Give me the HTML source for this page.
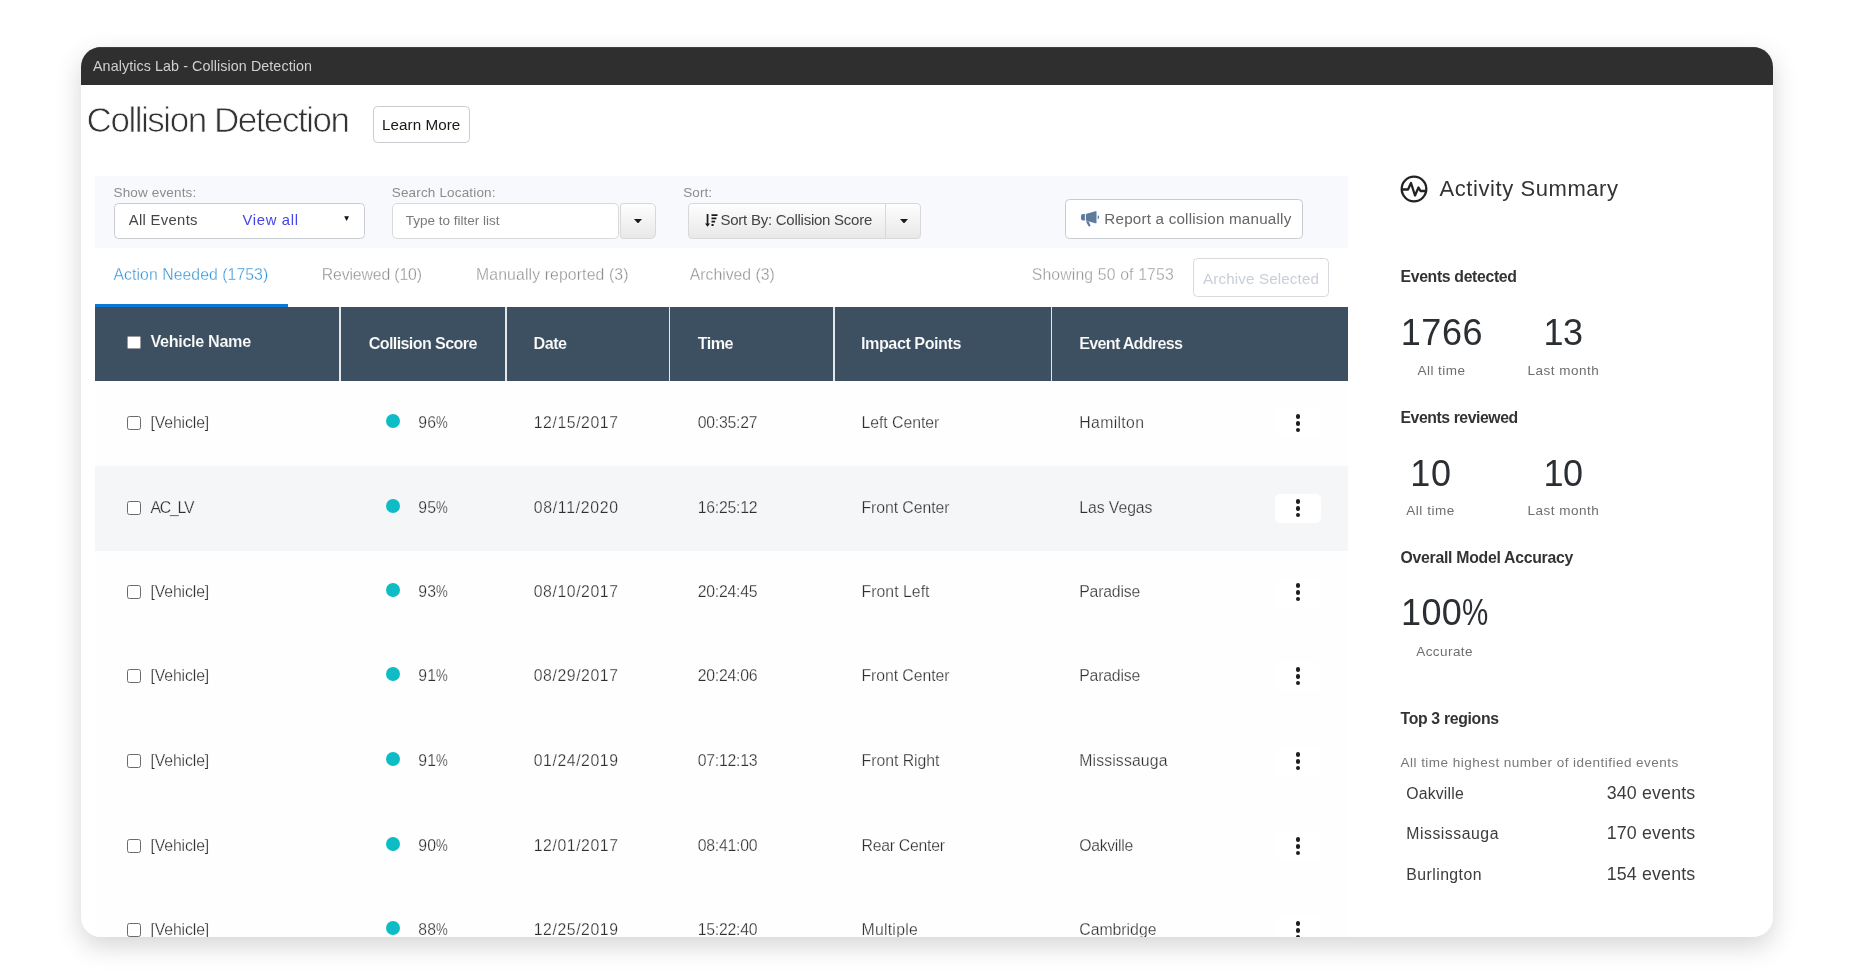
<!DOCTYPE html>
<html lang="en">
<head>
<meta charset="utf-8">
<title>Analytics Lab - Collision Detection</title>
<style>
*{box-sizing:border-box;margin:0;padding:0}
html,body{width:1854px;height:980px;overflow:hidden;background:#fff}
body{font-family:"Liberation Sans",sans-serif;position:relative}
.card{position:absolute;left:81px;top:47px;width:1692px;height:890px;border-radius:20px;background:#fff;
 box-shadow:0 9px 26px rgba(0,0,0,.17);overflow:hidden;will-change:transform}
.card *{position:absolute;white-space:nowrap}
.card .g{display:contents}
.card svg *{position:static}
.card .pc{position:static;display:inline-block;font-weight:inherit;transform-origin:0 50%}
.titlebar{left:0;top:0;width:1692px;height:37.5px;background:#2f2f2f;border-top:1px solid #0b4f74}
.main{left:14px;top:333.5px;width:1253px;height:557px;background:#fefefe}
.btn{border:1px solid #c8ccd1;border-radius:4.5px;background:#fff}
.grad{background:linear-gradient(#fefefe,#e8e8e8);border:1px solid #d8d8d8}
.th{background:#3c5061}
.sep{background:#e4e7ea}
.cb{border:1.3px solid #6b6b6b;border-radius:2.5px;background:#fff}
.dot{border-radius:50%;background:#0ebcc6}
.kebab{border-radius:5px;background:#fff}
.kebab i{left:20.5px;width:4.3px;height:4.3px;border-radius:50%;background:#1e1e1e}
</style>
</head>
<body>
<div class="card">
<header class="g">
<div class="titlebar"></div>
<span style="left:12.00px;top:9.55px;font-size:14.3px;line-height:18px;letter-spacing:0.082px;color:#d0d0d0;">Analytics Lab - Collision Detection</span>
</header>
<main class="g">
<div class="main"></div>
<h1 style="left:5.60px;top:51.27px;font-size:35px;line-height:44px;letter-spacing:-1.469px;color:#333;-webkit-text-stroke:0.75px #fff;font-weight:400;">Collision Detection</h1>
<div class="g" role="button">
<div class="btn" style="left:291.50px;top:59.30px;width:97.00px;height:36.40px;"></div>
<span style="left:301.00px;top:67.83px;font-size:15.2px;line-height:19px;letter-spacing:0.061px;color:#181818;">Learn More</span>
</div>
<section class="g" aria-label="Filters">
<div style="left:14.00px;top:128.75px;width:1253.00px;height:71.75px;background:#f8f9fd;"></div>
<label style="left:32.50px;top:136.82px;font-size:13.5px;line-height:17px;letter-spacing:0.155px;color:#8c8c8c;">Show events:</label>
<div class="btn" style="left:33.00px;top:156.00px;width:250.50px;height:35.50px;"></div>
<span style="left:47.75px;top:164.07px;font-size:14.8px;line-height:18px;letter-spacing:0.328px;color:#454545;">All Events</span>
<span style="left:161.50px;top:164.07px;font-size:14.8px;line-height:18px;letter-spacing:0.679px;color:#4545e8;">View all</span>
<svg style="left:262.9px;top:169.1px" width="5.2" height="5.2" viewBox="0 0 6 6"><path d="M0.2 0.4h5.6L3 5.8z" fill="#111"/></svg>
<label style="left:310.75px;top:136.82px;font-size:13.5px;line-height:17px;letter-spacing:0.163px;color:#8c8c8c;">Search Location:</label>
<div class="btn" style="left:310.75px;top:156.00px;width:227.25px;height:35.50px;border-radius:5px;border-color:#d9d9d9;"></div>
<span style="left:324.75px;top:164.82px;font-size:13.5px;line-height:17px;letter-spacing:-0.003px;color:#7a7a7a;">Type to filter list</span>
<div class="grad" style="left:538.50px;top:156.00px;width:36.00px;height:35.50px;border-radius:3px 5px 5px 3px;"></div>
<svg style="left:553px;top:171.6px" width="8" height="4.5" viewBox="0 0 9 5"><path d="M0 0h9L4.5 5z" fill="#1a1a1a"/></svg>
<label style="left:602.25px;top:136.82px;font-size:13.5px;line-height:17px;letter-spacing:0.062px;color:#8c8c8c;">Sort:</label>
<div class="grad" style="left:607.00px;top:156.00px;width:197.50px;height:35.50px;border-radius:4px 0 0 4px;"></div>
<div class="grad" style="left:804.00px;top:156.00px;width:36.00px;height:35.50px;border-radius:0 4px 4px 0;"></div>
<svg style="left:624.4px;top:167px" width="13" height="13" viewBox="0 0 13 13"><path d="M1.7 0h1.7v9.6h1.6L2.55 12.8 0 9.6h1.7z M6.5 0.2h6v1.8h-6z M6.5 3.5h4.9v1.8H6.5z M6.5 6.8h3.6v1.8H6.5z M6.5 10.1h2.1v1.9H6.5z" fill="#1a1a1a"/></svg>
<span style="left:639.50px;top:163.30px;font-size:15px;line-height:19px;letter-spacing:-0.252px;color:#444;">Sort By: Collision Score</span>
<svg style="left:819.2px;top:171.6px" width="8" height="4.5" viewBox="0 0 9 5"><path d="M0 0h9L4.5 5z" fill="#1a1a1a"/></svg>
<div class="g" role="button">
<div class="btn" style="left:984.00px;top:152.00px;width:237.50px;height:39.50px;"></div>
<svg style="left:1000px;top:164.1px" width="19" height="16" viewBox="0 0 19 16"><path d="M2 2.9h1.9v6.5H2a2 2 0 0 1-2-2V4.9a2 2 0 0 1 2-2z M4.9 2.9 14.2 0.2h1.3v12.1h-1.3L4.9 9.4z M16.7 4.6h.5a.8.8 0 0 1 .8.8v1.7a.8.8 0 0 1-.8.8h-.5z M5.4 9.9l2.3.6 1.9 4.3-1.6.9-2.6-4.2z" fill="#5d7c9c"/></svg>
<span style="left:1023.30px;top:161.83px;font-size:15.2px;line-height:19px;letter-spacing:0.210px;color:#666;">Report a collision manually</span>
</div>
</section>
<nav class="g" aria-label="Event tabs">
<span style="left:32.50px;top:217.73px;font-size:15.8px;line-height:20px;letter-spacing:0.055px;color:#3493d6;-webkit-text-stroke:0.3px #fff;">Action Needed (1753)</span>
<span style="left:240.75px;top:217.73px;font-size:15.8px;line-height:20px;letter-spacing:-0.133px;color:#8f8f8f;-webkit-text-stroke:0.3px #fff;">Reviewed (10)</span>
<span style="left:395.00px;top:217.73px;font-size:15.8px;line-height:20px;letter-spacing:0.117px;color:#8f8f8f;-webkit-text-stroke:0.3px #fff;">Manually reported (3)</span>
<span style="left:608.75px;top:217.73px;font-size:15.8px;line-height:20px;letter-spacing:-0.014px;color:#8f8f8f;-webkit-text-stroke:0.3px #fff;">Archived (3)</span>
<div style="left:14.00px;top:256.75px;width:192.50px;height:3.75px;background:#0b7ad4;"></div>
</nav>
<span style="left:950.75px;top:217.73px;font-size:15.8px;line-height:20px;letter-spacing:0.135px;color:#999;-webkit-text-stroke:0.3px #fff;">Showing 50 of 1753</span>
<div class="g" role="button" aria-disabled="true">
<div class="btn" style="left:1112.00px;top:211.00px;width:136.00px;height:39.00px;border-color:#d6dade;"></div>
<span style="left:1122.00px;top:222.48px;font-size:15.2px;line-height:19px;letter-spacing:0.130px;color:#c9cfd6;">Archive Selected</span>
</div>
<div class="g" role="table" aria-label="Collision events">
<div class="g" role="row">
<div class="th" style="left:14.40px;top:260.00px;width:1252.60px;height:73.50px;"></div>
<div class="sep" style="left:258.20px;top:260.00px;width:1.80px;height:73.50px;"></div>
<div class="sep" style="left:424.10px;top:260.00px;width:1.80px;height:73.50px;"></div>
<div class="sep" style="left:587.50px;top:260.00px;width:1.80px;height:73.50px;"></div>
<div class="sep" style="left:751.85px;top:260.00px;width:1.80px;height:73.50px;"></div>
<div class="sep" style="left:969.70px;top:260.00px;width:1.80px;height:73.50px;"></div>
<div style="left:46.25px;top:289.00px;width:13.25px;height:13.00px;background:#fff;border-radius:1.5px;border:1px solid #999;"></div>
<span style="left:69.50px;top:284.39px;font-size:16.2px;line-height:20px;letter-spacing:-0.341px;color:#fafafa;font-weight:700;-webkit-text-stroke:0.12px #3c5061;">Vehicle Name</span>
<span style="left:287.70px;top:285.99px;font-size:16.2px;line-height:20px;letter-spacing:-0.650px;color:#fafafa;font-weight:700;-webkit-text-stroke:0.12px #3c5061;">Collision Score</span>
<span style="left:452.50px;top:285.99px;font-size:16.2px;line-height:20px;letter-spacing:-0.533px;color:#fafafa;font-weight:700;-webkit-text-stroke:0.12px #3c5061;">Date</span>
<span style="left:616.75px;top:285.99px;font-size:16.2px;line-height:20px;letter-spacing:-0.583px;color:#fafafa;font-weight:700;-webkit-text-stroke:0.12px #3c5061;">Time</span>
<span style="left:780.00px;top:285.99px;font-size:16.2px;line-height:20px;letter-spacing:-0.475px;color:#fafafa;font-weight:700;-webkit-text-stroke:0.12px #3c5061;">Impact Points</span>
<span style="left:998.25px;top:285.99px;font-size:16.2px;line-height:20px;letter-spacing:-0.758px;color:#fafafa;font-weight:700;-webkit-text-stroke:0.12px #3c5061;">Event Address</span>
</div>
<div class="g" role="row">
<div class="cb" style="left:46.00px;top:369.25px;width:13.50px;height:13.75px;"></div>
<span style="left:69.50px;top:365.53px;font-size:15.8px;line-height:20px;letter-spacing:-0.125px;color:#303030;-webkit-text-stroke:0.25px #fefefe;">[Vehicle]</span>
<div class="dot" style="left:305.10px;top:366.60px;width:14.00px;height:14.00px;"></div>
<span style="left:337.25px;top:365.53px;font-size:15.8px;line-height:20px;letter-spacing:0.2px;color:#303030;-webkit-text-stroke:0.25px #fefefe;">96<b class="pc" style="transform:scaleX(0.838)">%</b></span>
<span style="left:452.75px;top:365.53px;font-size:15.8px;line-height:20px;letter-spacing:0.572px;color:#303030;-webkit-text-stroke:0.25px #fefefe;">12/15/2017</span>
<span style="left:616.75px;top:365.53px;font-size:15.8px;line-height:20px;letter-spacing:-0.250px;color:#303030;-webkit-text-stroke:0.25px #fefefe;">00:35:27</span>
<span style="left:780.50px;top:365.53px;font-size:15.8px;line-height:20px;letter-spacing:-0.040px;color:#303030;-webkit-text-stroke:0.25px #fefefe;">Left Center</span>
<span style="left:998.25px;top:365.53px;font-size:15.8px;line-height:20px;letter-spacing:0.343px;color:#303030;-webkit-text-stroke:0.25px #fefefe;">Hamilton</span>
<div class="kebab" style="left:1194.00px;top:361.75px;width:45.50px;height:29.50px;"><i style="top:5.6px"></i><i style="top:12.5px"></i><i style="top:19.4px"></i></div>
</div>
<div class="g" role="row">
<div style="left:14.00px;top:418.50px;width:1253.00px;height:85.00px;background:#f5f6f8;"></div>
<div class="cb" style="left:46.00px;top:454.25px;width:13.50px;height:13.75px;"></div>
<span style="left:69.50px;top:450.53px;font-size:15.8px;line-height:20px;letter-spacing:-1.225px;color:#303030;-webkit-text-stroke:0.25px #f5f6f8;">AC_LV</span>
<div class="dot" style="left:305.10px;top:451.60px;width:14.00px;height:14.00px;"></div>
<span style="left:337.25px;top:450.53px;font-size:15.8px;line-height:20px;letter-spacing:0.2px;color:#303030;-webkit-text-stroke:0.25px #f5f6f8;">95<b class="pc" style="transform:scaleX(0.838)">%</b></span>
<span style="left:452.75px;top:450.53px;font-size:15.8px;line-height:20px;letter-spacing:0.706px;color:#303030;-webkit-text-stroke:0.25px #f5f6f8;">08/11/2020</span>
<span style="left:616.75px;top:450.53px;font-size:15.8px;line-height:20px;letter-spacing:-0.250px;color:#303030;-webkit-text-stroke:0.25px #f5f6f8;">16:25:12</span>
<span style="left:780.50px;top:450.53px;font-size:15.8px;line-height:20px;letter-spacing:-0.064px;color:#303030;-webkit-text-stroke:0.25px #f5f6f8;">Front Center</span>
<span style="left:998.25px;top:450.53px;font-size:15.8px;line-height:20px;letter-spacing:-0.069px;color:#303030;-webkit-text-stroke:0.25px #f5f6f8;">Las Vegas</span>
<div class="kebab" style="left:1194.00px;top:446.75px;width:45.50px;height:29.50px;"><i style="top:5.6px"></i><i style="top:12.5px"></i><i style="top:19.4px"></i></div>
</div>
<div class="g" role="row">
<div class="cb" style="left:46.00px;top:538.25px;width:13.50px;height:13.75px;"></div>
<span style="left:69.50px;top:534.53px;font-size:15.8px;line-height:20px;letter-spacing:-0.125px;color:#303030;-webkit-text-stroke:0.25px #fefefe;">[Vehicle]</span>
<div class="dot" style="left:305.10px;top:535.60px;width:14.00px;height:14.00px;"></div>
<span style="left:337.25px;top:534.53px;font-size:15.8px;line-height:20px;letter-spacing:0.2px;color:#303030;-webkit-text-stroke:0.25px #fefefe;">93<b class="pc" style="transform:scaleX(0.838)">%</b></span>
<span style="left:452.75px;top:534.53px;font-size:15.8px;line-height:20px;letter-spacing:0.572px;color:#303030;-webkit-text-stroke:0.25px #fefefe;">08/10/2017</span>
<span style="left:616.75px;top:534.53px;font-size:15.8px;line-height:20px;letter-spacing:-0.250px;color:#303030;-webkit-text-stroke:0.25px #fefefe;">20:24:45</span>
<span style="left:780.50px;top:534.53px;font-size:15.8px;line-height:20px;letter-spacing:0.044px;color:#303030;-webkit-text-stroke:0.25px #fefefe;">Front Left</span>
<span style="left:998.25px;top:534.53px;font-size:15.8px;line-height:20px;letter-spacing:-0.193px;color:#303030;-webkit-text-stroke:0.25px #fefefe;">Paradise</span>
<div class="kebab" style="left:1194.00px;top:530.75px;width:45.50px;height:29.50px;"><i style="top:5.6px"></i><i style="top:12.5px"></i><i style="top:19.4px"></i></div>
</div>
<div class="g" role="row">
<div class="cb" style="left:46.00px;top:622.25px;width:13.50px;height:13.75px;"></div>
<span style="left:69.50px;top:618.53px;font-size:15.8px;line-height:20px;letter-spacing:-0.125px;color:#303030;-webkit-text-stroke:0.25px #fefefe;">[Vehicle]</span>
<div class="dot" style="left:305.10px;top:619.60px;width:14.00px;height:14.00px;"></div>
<span style="left:337.25px;top:618.53px;font-size:15.8px;line-height:20px;letter-spacing:0.2px;color:#303030;-webkit-text-stroke:0.25px #fefefe;">91<b class="pc" style="transform:scaleX(0.838)">%</b></span>
<span style="left:452.75px;top:618.53px;font-size:15.8px;line-height:20px;letter-spacing:0.572px;color:#303030;-webkit-text-stroke:0.25px #fefefe;">08/29/2017</span>
<span style="left:616.75px;top:618.53px;font-size:15.8px;line-height:20px;letter-spacing:-0.250px;color:#303030;-webkit-text-stroke:0.25px #fefefe;">20:24:06</span>
<span style="left:780.50px;top:618.53px;font-size:15.8px;line-height:20px;letter-spacing:-0.064px;color:#303030;-webkit-text-stroke:0.25px #fefefe;">Front Center</span>
<span style="left:998.25px;top:618.53px;font-size:15.8px;line-height:20px;letter-spacing:-0.193px;color:#303030;-webkit-text-stroke:0.25px #fefefe;">Paradise</span>
<div class="kebab" style="left:1194.00px;top:614.75px;width:45.50px;height:29.50px;"><i style="top:5.6px"></i><i style="top:12.5px"></i><i style="top:19.4px"></i></div>
</div>
<div class="g" role="row">
<div class="cb" style="left:46.00px;top:707.25px;width:13.50px;height:13.75px;"></div>
<span style="left:69.50px;top:703.53px;font-size:15.8px;line-height:20px;letter-spacing:-0.125px;color:#303030;-webkit-text-stroke:0.25px #fefefe;">[Vehicle]</span>
<div class="dot" style="left:305.10px;top:704.60px;width:14.00px;height:14.00px;"></div>
<span style="left:337.25px;top:703.53px;font-size:15.8px;line-height:20px;letter-spacing:0.2px;color:#303030;-webkit-text-stroke:0.25px #fefefe;">91<b class="pc" style="transform:scaleX(0.838)">%</b></span>
<span style="left:452.75px;top:703.53px;font-size:15.8px;line-height:20px;letter-spacing:0.572px;color:#303030;-webkit-text-stroke:0.25px #fefefe;">01/24/2019</span>
<span style="left:616.75px;top:703.53px;font-size:15.8px;line-height:20px;letter-spacing:-0.250px;color:#303030;-webkit-text-stroke:0.25px #fefefe;">07:12:13</span>
<span style="left:780.50px;top:703.53px;font-size:15.8px;line-height:20px;letter-spacing:-0.015px;color:#303030;-webkit-text-stroke:0.25px #fefefe;">Front Right</span>
<span style="left:998.25px;top:703.53px;font-size:15.8px;line-height:20px;letter-spacing:0.130px;color:#303030;-webkit-text-stroke:0.25px #fefefe;">Mississauga</span>
<div class="kebab" style="left:1194.00px;top:699.75px;width:45.50px;height:29.50px;"><i style="top:5.6px"></i><i style="top:12.5px"></i><i style="top:19.4px"></i></div>
</div>
<div class="g" role="row">
<div class="cb" style="left:46.00px;top:792.25px;width:13.50px;height:13.75px;"></div>
<span style="left:69.50px;top:788.53px;font-size:15.8px;line-height:20px;letter-spacing:-0.125px;color:#303030;-webkit-text-stroke:0.25px #fefefe;">[Vehicle]</span>
<div class="dot" style="left:305.10px;top:789.60px;width:14.00px;height:14.00px;"></div>
<span style="left:337.25px;top:788.53px;font-size:15.8px;line-height:20px;letter-spacing:0.2px;color:#303030;-webkit-text-stroke:0.25px #fefefe;">90<b class="pc" style="transform:scaleX(0.838)">%</b></span>
<span style="left:452.75px;top:788.53px;font-size:15.8px;line-height:20px;letter-spacing:0.572px;color:#303030;-webkit-text-stroke:0.25px #fefefe;">12/01/2017</span>
<span style="left:616.75px;top:788.53px;font-size:15.8px;line-height:20px;letter-spacing:-0.250px;color:#303030;-webkit-text-stroke:0.25px #fefefe;">08:41:00</span>
<span style="left:780.50px;top:788.53px;font-size:15.8px;line-height:20px;letter-spacing:-0.255px;color:#303030;-webkit-text-stroke:0.25px #fefefe;">Rear Center</span>
<span style="left:998.25px;top:788.53px;font-size:15.8px;line-height:20px;letter-spacing:-0.314px;color:#303030;-webkit-text-stroke:0.25px #fefefe;">Oakville</span>
<div class="kebab" style="left:1194.00px;top:784.75px;width:45.50px;height:29.50px;"><i style="top:5.6px"></i><i style="top:12.5px"></i><i style="top:19.4px"></i></div>
</div>
<div class="g" role="row">
<div class="cb" style="left:46.00px;top:876.25px;width:13.50px;height:13.75px;"></div>
<span style="left:69.50px;top:872.53px;font-size:15.8px;line-height:20px;letter-spacing:-0.125px;color:#303030;-webkit-text-stroke:0.25px #fefefe;">[Vehicle]</span>
<div class="dot" style="left:305.10px;top:873.60px;width:14.00px;height:14.00px;"></div>
<span style="left:337.25px;top:872.53px;font-size:15.8px;line-height:20px;letter-spacing:0.2px;color:#303030;-webkit-text-stroke:0.25px #fefefe;">88<b class="pc" style="transform:scaleX(0.838)">%</b></span>
<span style="left:452.75px;top:872.53px;font-size:15.8px;line-height:20px;letter-spacing:0.572px;color:#303030;-webkit-text-stroke:0.25px #fefefe;">12/25/2019</span>
<span style="left:616.75px;top:872.53px;font-size:15.8px;line-height:20px;letter-spacing:-0.250px;color:#303030;-webkit-text-stroke:0.25px #fefefe;">15:22:40</span>
<span style="left:780.50px;top:872.53px;font-size:15.8px;line-height:20px;letter-spacing:0.257px;color:#303030;-webkit-text-stroke:0.25px #fefefe;">Multiple</span>
<span style="left:998.25px;top:872.53px;font-size:15.8px;line-height:20px;letter-spacing:-0.006px;color:#303030;-webkit-text-stroke:0.25px #fefefe;">Cambridge</span>
<div class="kebab" style="left:1194.00px;top:868.75px;width:45.50px;height:29.50px;"><i style="top:5.6px"></i><i style="top:12.5px"></i><i style="top:19.4px"></i></div>
</div>
</div>
</main>
<aside class="g">
<svg style="left:1318.5px;top:128.25px" width="28" height="28" viewBox="0 0 28 28" fill="none" stroke="#222" stroke-width="2.3" stroke-linecap="round" stroke-linejoin="round"><circle cx="14" cy="14" r="12.3"/><path d="M2.5 14.5h5.5l3-6.5 4 12.5 3.5-8 2 3.5h5"/></svg>
<h2 style="left:1358.50px;top:127.58px;font-size:22px;line-height:28px;letter-spacing:0.573px;color:#333;font-weight:400;">Activity Summary</h2>
<span style="left:1319.50px;top:219.53px;font-size:15.8px;line-height:20px;letter-spacing:-0.336px;color:#333;font-weight:700;">Events detected</span>
<span style="left:1319.80px;top:262.63px;font-size:36px;line-height:45px;letter-spacing:0.533px;color:#2b2e32;">1766</span>
<span style="left:1462.50px;top:262.63px;font-size:36px;line-height:45px;letter-spacing:-0.550px;color:#2b2e32;">13</span>
<span style="left:1336.50px;top:314.82px;font-size:13.5px;line-height:17px;letter-spacing:0.464px;color:#6e6e6e;">All time</span>
<span style="left:1446.50px;top:314.82px;font-size:13.5px;line-height:17px;letter-spacing:0.494px;color:#6e6e6e;">Last month</span>
<span style="left:1319.50px;top:360.93px;font-size:15.8px;line-height:20px;letter-spacing:-0.436px;color:#333;font-weight:700;">Events reviewed</span>
<span style="left:1329.30px;top:403.53px;font-size:36px;line-height:45px;letter-spacing:0.650px;color:#2b2e32;">10</span>
<span style="left:1462.50px;top:403.53px;font-size:36px;line-height:45px;letter-spacing:-0.550px;color:#2b2e32;">10</span>
<span style="left:1325.25px;top:455.32px;font-size:13.5px;line-height:17px;letter-spacing:0.536px;color:#6e6e6e;">All time</span>
<span style="left:1446.50px;top:455.32px;font-size:13.5px;line-height:17px;letter-spacing:0.494px;color:#6e6e6e;">Last month</span>
<span style="left:1319.50px;top:500.53px;font-size:15.8px;line-height:20px;letter-spacing:-0.276px;color:#333;font-weight:700;">Overall Model Accuracy</span>
<span style="left:1320.00px;top:543.03px;font-size:36px;line-height:45px;letter-spacing:0.4px;color:#2b2e32;">100<b class="pc" style="transform:scaleX(0.820)">%</b></span>
<span style="left:1335.25px;top:595.82px;font-size:13.5px;line-height:17px;letter-spacing:0.429px;color:#6e6e6e;">Accurate</span>
<span style="left:1319.50px;top:661.73px;font-size:15.8px;line-height:20px;letter-spacing:-0.325px;color:#333;font-weight:700;">Top 3 regions</span>
<span style="left:1319.50px;top:706.82px;font-size:13.5px;line-height:17px;letter-spacing:0.473px;color:#787878;">All time highest number of identified events</span>
<span style="left:1325.25px;top:736.53px;font-size:15.8px;line-height:20px;letter-spacing:0.186px;color:#3c3c3c;">Oakville</span>
<span style="left:1525.75px;top:734.53px;font-size:17.8px;line-height:22px;letter-spacing:0.161px;color:#3c3c3c;">340 events</span>
<span style="left:1325.25px;top:776.73px;font-size:15.8px;line-height:20px;letter-spacing:0.530px;color:#3c3c3c;">Mississauga</span>
<span style="left:1525.75px;top:774.73px;font-size:17.8px;line-height:22px;letter-spacing:0.161px;color:#3c3c3c;">170 events</span>
<span style="left:1325.25px;top:817.53px;font-size:15.8px;line-height:20px;letter-spacing:0.456px;color:#3c3c3c;">Burlington</span>
<span style="left:1525.75px;top:815.53px;font-size:17.8px;line-height:22px;letter-spacing:0.161px;color:#3c3c3c;">154 events</span>
</aside>
</div>
</body>
</html>
